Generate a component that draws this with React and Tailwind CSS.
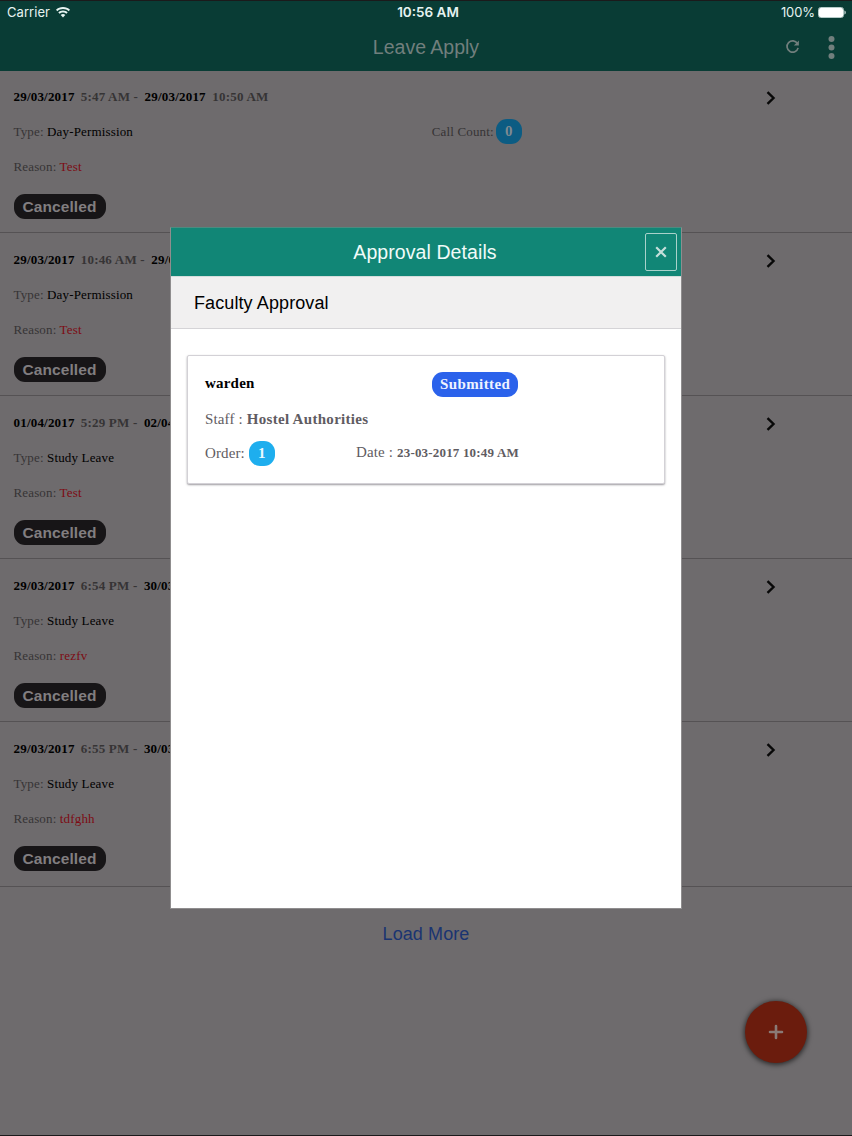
import React from 'react';
import clsx from 'clsx';


const LEAVES = [
  { id: 1, fromDate: '29/03/2017', fromTime: '5:47 AM', toDate: '29/03/2017', toTime: '10:50 AM', type: 'Day-Permission', reason: 'Test', status: 'Cancelled', callCount: 0 },
  { id: 2, fromDate: '29/03/2017', fromTime: '10:46 AM', toDate: '29/03/2017', type: 'Day-Permission', reason: 'Test', status: 'Cancelled' },
  { id: 3, fromDate: '01/04/2017', fromTime: '5:29 PM', toDate: '02/04/2017', type: 'Study Leave', reason: 'Test', status: 'Cancelled' },
  { id: 4, fromDate: '29/03/2017', fromTime: '6:54 PM', toDate: '30/03/2017', type: 'Study Leave', reason: 'rezfv', status: 'Cancelled' },
  { id: 5, fromDate: '29/03/2017', fromTime: '6:55 PM', toDate: '30/03/2017', type: 'Study Leave', reason: 'tdfghh', status: 'Cancelled' },
];


const App = () =>
{
  return (
    <div className="relative flex h-[1136px] w-[852px] flex-col overflow-hidden border-y border-[#1b1a1b] bg-[#6e6b6d] font-['Liberation_Sans',Arial,sans-serif]">

      <header className="h-[70px] shrink-0 bg-[#093c35]">
        <StatusBar />
        <NavBar title="Leave Apply" />
      </header>

      <main className="flex flex-1 flex-col">
        <ul>
          {LEAVES.map((leave) => (
            <LeaveRow key={leave.id} leave={leave} />
          ))}
        </ul>

        <button className="mx-auto mt-[35px] h-6 text-[18px] leading-6 tracking-[0.1px] text-[#1a3471]">
          Load More
        </button>
      </main>

      <AddButton />
      <ApprovalModal />

    </div>
  );
};


const StatusBar = () =>
{
  return (
    <div className="grid h-[22px] grid-cols-3 items-center pl-[7px] pr-[6px] font-['Inter',sans-serif] text-[13px] leading-[22px] text-[#e6f3f1]">
      <div className="flex items-center gap-[6px]">
        <span className="tracking-[0.05px]">Carrier</span>
        <svg width="14" height="11" viewBox="0 0 14 11" fill="currentColor">
          <path d="M7 0C4.2 0 1.8 1 0 2.8l1.3 1.4C2.800 2.700 4.800 1.900 7 1.900s4.200.8 5.700 2.300L14 2.800C12.200 1 9.800 0 7 0Z" />
          <path d="M7 3.500c-1.800 0-3.500.7-4.700 1.900l1.400 1.400C4.500 5.900 5.700 5.400 7 5.400s2.500.5 3.300 1.400l1.400-1.400C10.500 4.200 8.800 3.500 7 3.500Z" />
          <path d="M7 7c-.9 0-1.700.3-2.300.9L7 10.600l2.300-2.700C8.700 7.300 7.900 7 7 7Z" />
        </svg>
      </div>
      <span className="pl-[3px] text-center text-[13.500px] font-semibold">10:56 AM</span>
      <div className="flex items-center justify-end gap-[3px]">
        <span className="tracking-[-0.1px]">100%</span>
        <svg width="28" height="11" viewBox="0 0 28 11" fill="none">
          <rect x="0.500" y="0.500" width="25" height="10" rx="2.200" stroke="#b5cbc8" />
          <rect x="1" y="1" width="24" height="9" rx="1.500" fill="#fff" />
          <path d="M26.500 3.600c1.600.4 1.600 3.400 0 3.800Z" fill="#e6f3f1" />
        </svg>
      </div>
    </div>
  );
};


const NavBar = ({ title }) =>
{
  return (
    <div className="grid h-[48px] grid-cols-[80px_1fr_80px] items-center text-[#717f7d]">
      <span />
      <h1 className="text-center text-[19.500px] leading-6">{title}</h1>
      <div className="flex items-center justify-end gap-[28px] pr-[17px]">
        <svg className="-mt-px" width="15" height="15" viewBox="0 0 16 16" fill="none">
          <path d="M13.300 4.900A6 6 0 1 0 14 9.500" stroke="currentColor" strokeWidth="1.800" />
          <path d="M14.800 1.600v5.200H9.400Z" fill="currentColor" />
        </svg>
        <svg width="7" height="23" viewBox="0 0 7 23" fill="currentColor">
          <circle cx="3.500" cy="3" r="3" />
          <circle cx="3.500" cy="11.500" r="3" />
          <circle cx="3.500" cy="20" r="3" />
        </svg>
      </div>
    </div>
  );
};


const LeaveRow = ({ leave }) =>
{
  return (
    <li className="h-[163px] border-b border-[#555254] pl-[13.500px] pt-[19px] font-['Liberation_Serif',serif] text-[13px] leading-4 tracking-[0.15px] text-[#363435] first:h-[162px] first:pt-[18px] last:h-[165px]">

      <div className="flex justify-between pr-[76px]">
        <div className="flex whitespace-pre font-bold tracking-[0.2px]">
          <span className="text-black">{leave.fromDate}</span>
          <span className="ml-[6px]">{leave.fromTime} - </span>
          <span className="ml-[3px] text-black">{leave.toDate}</span>
          {leave.toTime && <span className="ml-[6.500px]">{leave.toTime}</span>}
        </div>
        <svg className="mt-[2px]" width="10" height="14" viewBox="0 0 10 14" fill="none">
          <path d="M1.500 1.200 7.500 7l-6 5.800" stroke="#080808" strokeWidth="2.400" />
        </svg>
      </div>

      <div className="mt-[18px] grid h-[17px] grid-cols-2 items-center">
        <div className="h-4">Type: <span className="text-black">{leave.type}</span></div>
        {leave.callCount !== undefined && (
          <div className="-ml-px flex h-4 items-center gap-[2px]">
            <span className="tracking-[0.15px]">Call Count:</span>
            <Badge className="bg-[#0c5c83] text-[#7e8a91]">{leave.callCount}</Badge>
          </div>
        )}
      </div>

      <div className="mt-[19px]">
        Reason: <span className="text-[#7d0c14]">{leave.reason}</span>
      </div>

      <span className="mt-[19px] flex h-[25px] w-[92px] items-center justify-center rounded-[11px] bg-[#171517] font-['Liberation_Sans',Arial,sans-serif] text-[15.500px] font-bold tracking-[0.1px] text-[#817e80]">
        {leave.status}
      </span>

    </li>
  );
};


const Badge = ({ className, children }) =>
{
  return (
    <span className={clsx('flex h-[25px] min-w-[26px] items-center justify-center rounded-[11px] pb-px text-[15px] font-bold', className)}>
      {children}
    </span>
  );
};


const AddButton = () =>
{
  return (
    <button className="absolute bottom-[72px] right-[45px] flex size-[62px] items-center justify-center rounded-full bg-[#6b1c0d] shadow-[0_1px_5px_1px_rgba(0,0,0,0.6)]">
      <svg width="16" height="16" viewBox="0 0 16 16" fill="none" stroke="#8a7a76" strokeWidth="2.600" strokeLinecap="round">
        <path d="M8 2v12M2 8h12" />
      </svg>
    </button>
  );
};


const ApprovalModal = () =>
{
  return (
    <div className="absolute left-[170px] top-[226px] flex h-[682px] w-[512px] flex-col border border-[#8f8d8e] border-t-[#4c8b80] bg-white">

      <div className="flex h-[48px] shrink-0 items-center bg-[#118676] pr-[4px]">
        <h2 className="flex-1 pl-[34px] text-center text-[19.500px] leading-6 tracking-[0.08px] text-[#f0fbf9]">
          Approval Details
        </h2>
        <button className="flex h-[38px] w-[32px] items-center justify-center rounded-[2px] border border-[#a9d2cb]">
          <svg width="12" height="12" viewBox="0 0 12 12" fill="none" stroke="#c5dfdb" strokeWidth="2.200">
            <path d="m1.200 1.200 9.600 9.600M10.800 1.200l-9.600 9.600" />
          </svg>
        </button>
      </div>

      <div className="flex h-[53px] shrink-0 items-center border-b border-t border-b-[#d5d4d7] border-t-[#d4dedc] bg-[#f1f0f0] px-[23px] pt-px text-[18px] tracking-[0.1px] text-black">
        Faculty Approval
      </div>

      <ApprovalCard />

    </div>
  );
};


const ApprovalCard = () =>
{
  return (
    <div className="mx-[16px] mt-[26px] h-[129px] rounded-[2px] border border-[#d3d1d6] bg-white px-[17px] pt-[16px] font-['Liberation_Serif',serif] text-[15px] leading-6 text-[#5f5c62] shadow-[0_1px_2px_0_rgba(60,55,65,0.5)]">

      <div className="flex h-6">
        <span className="-mt-px w-[227px] font-bold tracking-[0.2px] text-black">warden</span>
        <Badge className="bg-[#2b62eb] px-[8px] tracking-[0.4px] text-[#eef3ff]">Submitted</Badge>
      </div>

      <div className="mt-[11px] tracking-[0.15px]">
        Staff : <span className="font-bold tracking-[0.3px]">Hostel Authorities</span>
      </div>

      <div className="mt-[10px] flex h-6 items-center">
        <div className="flex w-[151px] items-center gap-[4px] tracking-[0.1px]">
          <span>Order:</span>
          <Badge className="bg-[#1eaeee] text-[#eafaff]">1</Badge>
        </div>
        <div className="-mt-px tracking-[0.15px]">
          Date : <span className="text-[13px] font-bold tracking-[0.18px]">23-03-2017 10:49 AM</span>
        </div>
      </div>

    </div>
  );
};


export default App;
